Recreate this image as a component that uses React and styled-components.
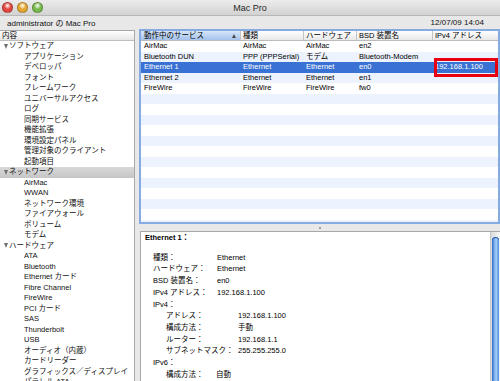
import React from 'react';
import styled, { createGlobalStyle } from 'styled-components';

const GlobalStyle = createGlobalStyle`
	html, body {
		margin: 0;
		padding: 0;
	}
	body {
		font-family: "Liberation Sans", "Noto Sans CJK JP", sans-serif;
		font-size: 7.5px;
		color: #000;
	}
`;

const sidebarItems = [
	{ label: 'ソフトウェア', group: true },
	{ label: 'アプリケーション' },
	{ label: 'デベロッパ' },
	{ label: 'フォント' },
	{ label: 'フレームワーク' },
	{ label: 'ユニバーサルアクセス' },
	{ label: 'ログ' },
	{ label: '同期サービス' },
	{ label: '機能拡張' },
	{ label: '環境設定パネル' },
	{ label: '管理対象のクライアント' },
	{ label: '起動項目' },
	{ label: 'ネットワーク', group: true, selected: true },
	{ label: 'AirMac' },
	{ label: 'WWAN' },
	{ label: 'ネットワーク環境' },
	{ label: 'ファイアウォール' },
	{ label: 'ボリューム' },
	{ label: 'モデム' },
	{ label: 'ハードウェア', group: true },
	{ label: 'ATA' },
	{ label: 'Bluetooth' },
	{ label: 'Ethernet カード' },
	{ label: 'Fibre Channel' },
	{ label: 'FireWire' },
	{ label: 'PCI カード' },
	{ label: 'SAS' },
	{ label: 'Thunderbolt' },
	{ label: 'USB' },
	{ label: 'オーディオ（内蔵）' },
	{ label: 'カードリーダー' },
	{ label: 'グラフィックス／ディスプレイ' },
	{ label: 'パラレル ATA' },
];

const columns = ['動作中のサービス', '種類', 'ハードウェア', 'BSD 装置名', 'IPv4 アドレス'];

const services = [
	['AirMac', 'AirMac', 'AirMac', 'en2', ''],
	['Bluetooth DUN', 'PPP (PPPSerial)', 'モデム', 'Bluetooth-Modem', ''],
	['Ethernet 1', 'Ethernet', 'Ethernet', 'en0', '192.168.1.100'],
	['Ethernet 2', 'Ethernet', 'Ethernet', 'en1', ''],
	['FireWire', 'FireWire', 'FireWire', 'fw0', ''],
];

const SELECTED = 2;
const TOTAL_ROWS = 18;

export default function App() {
	const rows = [...services];
	while (rows.length < TOTAL_ROWS) rows.push(['', '', '', '', '']);

	return (
		<>
			<GlobalStyle />
			<Window>
				<TitleBar>
					<Lights>
						<Light color="#e2463f" />
						<Light color="#e5a630" />
						<Light color="#78b94b" />
					</Lights>
					<Title>Mac Pro</Title>
					<span />
				</TitleBar>
				<InfoBar>
					<span>administrator の Mac Pro</span>
					<span>12/07/09 14:04</span>
				</InfoBar>
				<Body>
					<Sidebar>
						<PaneHeader>内容</PaneHeader>
						{sidebarItems.map((item) => (
							<SideRow key={item.label} $selected={item.selected} $group={item.group}>
								{item.group && <Disclosure />}
								{item.label}
							</SideRow>
						))}
					</Sidebar>
					<Main>
						<TableBox>
							<TableRow $header>
								{columns.map((c, i) => (
									<HeadCell key={c} $sorted={i === 0}>
										{c}
										{i === 0 && <SortArrow />}
									</HeadCell>
								))}
							</TableRow>
							{rows.map((r, i) => (
								<TableRow key={i} $striped={i % 2 === 1} $selected={i === SELECTED}>
									{r.map((v, j) => (
										<Cell key={j} $first={j === 0}>
											{v}
											{i === SELECTED && j === 4 && <Callout />}
										</Cell>
									))}
								</TableRow>
							))}
						</TableBox>
						<Splitter>
							<Grip />
						</Splitter>
						<Detail>
							<DetailBody>
								<DetailTitle>Ethernet 1：</DetailTitle>
								<Props $indent={8} $labelWidth={64}>
									<span>種類：</span><span>Ethernet</span>
									<span>ハードウェア：</span><span>Ethernet</span>
									<span>BSD 装置名：</span><span>en0</span>
									<span>IPv4 アドレス：</span><span>192.168.1.100</span>
								</Props>
								<Section>IPv4：</Section>
								<Props $indent={21} $labelWidth={72}>
									<span>アドレス：</span><span>192.168.1.100</span>
									<span>構成方法：</span><span>手動</span>
									<span>ルーター：</span><span>192.168.1.1</span>
									<span>サブネットマスク：</span><span>255.255.255.0</span>
								</Props>
								<Section>IPv6：</Section>
								<Props $indent={21} $labelWidth={50}>
									<span>構成方法：</span><span>自動</span>
								</Props>
							</DetailBody>
							<ScrollTrack>
								<ScrollThumb />
							</ScrollTrack>
						</Detail>
					</Main>
				</Body>
			</Window>
		</>
	);
}

const Window = styled.div`
	width: 500px;
	height: 381px;
	display: flex;
	flex-direction: column;
	background: #e8e8e8;
	overflow: hidden;
`;

const TitleBar = styled.div`
	height: 15px;
	flex: none;
	display: grid;
	grid-template-columns: 1fr auto 1fr;
	align-items: center;
	background: linear-gradient(#ececec, #d2d2d2);
	border-bottom: 1px solid #b8b8b8;
`;

const Lights = styled.div`
	display: flex;
	gap: 4px;
	padding-left: 2px;
`;

const Light = styled.span`
	width: 11px;
	height: 11px;
	border-radius: 50%;
	box-sizing: border-box;
	border: 1px solid rgba(0, 0, 0, 0.25);
	background: radial-gradient(circle at 50% 30%, #ffffff 0%, ${(p) => p.color} 45%, ${(p) => p.color} 100%);
`;

const Title = styled.div`
	font-size: 9px;
	color: #2a2a2a;
`;

const InfoBar = styled.div`
	height: 13px;
	flex: none;
	display: flex;
	align-items: center;
	justify-content: space-between;
	padding: 0 16px 0 7px;
	font-size: 8px;
	color: #111;
`;

const Body = styled.div`
	flex: 1;
	display: flex;
	min-height: 0;
`;

const Sidebar = styled.div`
	width: 135px;
	flex: none;
	box-sizing: border-box;
	margin-top: 1px;
	background: #fff;
	border-top: 1px solid #a8a8a8;
	border-right: 1px solid #a8a8a8;
	overflow: hidden;
`;

const PaneHeader = styled.div`
	height: 10px;
	line-height: 10px;
	box-sizing: border-box;
	padding-left: 2px;
	background: linear-gradient(#ffffff, #e6e6e6);
	border-bottom: 1px solid #bdbdbd;
`;

const SideRow = styled.div`
	height: 10.5px;
	line-height: 10.5px;
	display: flex;
	align-items: center;
	white-space: nowrap;
	padding-left: ${(p) => (p.$group ? '4px' : '24px')};
	background: ${(p) => (p.$selected ? 'linear-gradient(#d8d8d8, #c6c6c6)' : 'transparent')};
	color: #111;
`;

const Disclosure = styled.span`
	width: 0;
	height: 0;
	margin-right: 1px;
	border-left: 2.5px solid transparent;
	border-right: 2.5px solid transparent;
	border-top: 5px solid #6f6f6f;
`;

const Main = styled.div`
	flex: 1;
	display: flex;
	flex-direction: column;
	margin-left: 4px;
	min-width: 0;
`;

const TableBox = styled.div`
	height: 195px;
	flex: none;
	box-sizing: border-box;
	border: 2px solid #86abe0;
	background: #fff;
	overflow: hidden;
`;

const TableRow = styled.div`
	display: grid;
	grid-template-columns: 100px 63px 53px 76px 1fr;
	height: ${(p) => (p.$header ? '10px' : '10.5px')};
	line-height: ${(p) => (p.$header ? '10px' : '10.5px')};
	box-sizing: border-box;
	background: ${(p) => (p.$selected ? '#3a72d4' : p.$striped ? '#edf3fe' : '#fff')};
	color: ${(p) => (p.$selected ? '#fff' : '#000')};
	${(p) => p.$header && 'border-bottom: 1px solid #bcbcbc; background: linear-gradient(#ffffff, #e8e8e8);'}
`;

const HeadCell = styled.div`
	position: relative;
	padding-left: ${(p) => (p.$sorted ? '3px' : '2px')};
	border-right: 1px solid #c4c4c4;
	white-space: nowrap;
	overflow: hidden;
	background: ${(p) => (p.$sorted ? 'linear-gradient(#d6e5f9, #a4c3ec)' : 'transparent')};
	&:last-child {
		border-right: none;
	}
`;

const SortArrow = styled.span`
	position: absolute;
	right: 4px;
	top: 3px;
	width: 0;
	height: 0;
	border-left: 2px solid transparent;
	border-right: 2px solid transparent;
	border-bottom: 4px solid #4a4a4a;
`;

const Cell = styled.div`
	position: relative;
	padding-left: ${(p) => (p.$first ? '3px' : '2px')};
	white-space: nowrap;
`;

const Callout = styled.span`
	position: absolute;
	left: 1px;
	right: 0;
	top: -4px;
	bottom: -4px;
	border: 3px solid #e8000f;
	pointer-events: none;
`;

const Splitter = styled.div`
	height: 7px;
	flex: none;
	display: flex;
	justify-content: center;
	align-items: center;
`;

const Grip = styled.span`
	width: 2px;
	height: 2px;
	background: #8a8a8a;
	border-radius: 50%;
`;

const Detail = styled.div`
	flex: 1;
	display: flex;
	margin-left: 1px;
	background: #fff;
	border-top: 1px solid #a8a8a8;
	border-left: 1px solid #a8a8a8;
	min-height: 0;
	overflow: hidden;
`;

const DetailBody = styled.div`
	flex: 1;
	line-height: 11.7px;
	padding-left: 4px;
`;

const DetailTitle = styled.div`
	font-weight: bold;
	margin-bottom: 8px;
`;

const Section = styled.div`
	padding-left: 8px;
`;

const Props = styled.div`
	display: grid;
	grid-template-columns: ${(p) => p.$labelWidth}px 1fr;
	padding-left: ${(p) => p.$indent}px;
	white-space: nowrap;
`;

const ScrollTrack = styled.div`
	width: 10px;
	flex: none;
	box-sizing: border-box;
	padding: 5px 1px 0 1px;
	background: linear-gradient(to right, #dcdcdc, #f6f6f6);
	border-left: 1px solid #c6c6c6;
	display: flex;
`;

const ScrollThumb = styled.div`
	flex: 1;
	border-radius: 4px 4px 0 0;
	background: linear-gradient(to right, #2f6cc9, #78aeee 35%, #a8cff7 60%, #4a88db);
	box-shadow: inset 0 1px 0 #1f56a8;
`;
